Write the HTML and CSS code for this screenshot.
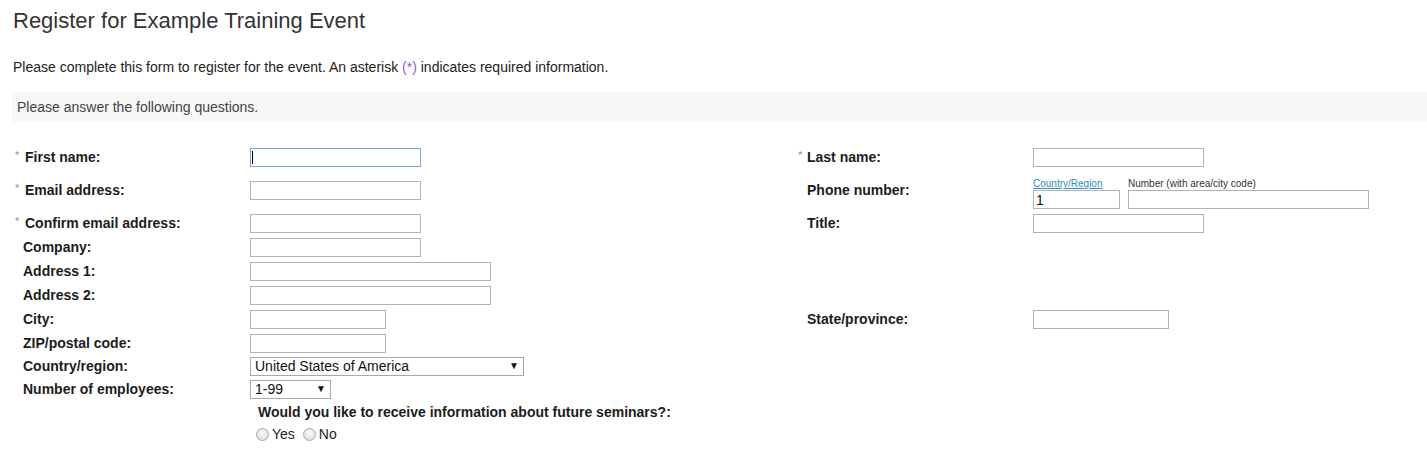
FILE: index.html
```html
<!DOCTYPE html>
<html lang="en">
<head>
<meta charset="utf-8">
<title>Register for Example Training Event</title>
<link rel="stylesheet" href="styles.css">
</head>
<body>
<div class="page">
  <h1 class="title">Register for Example Training Event</h1>
  <p class="intro">Please complete this form to register for the event. An asterisk <span class="req-note">(*)</span> indicates required information.</p>
  <div class="section-bar">Please answer the following questions.</div>

  <form class="form">
    <div class="row r33">
      <label class="lbl req-left"><span class="ast">*</span>First name:</label>
      <div class="field"><span class="caret-wrap"><input type="text" class="inp w172 focused"><span class="caret"></span></span></div>
      <label class="lbl right"><span class="ast ast-right">*</span>Last name:</label>
      <div class="field"><input type="text" class="inp w172"></div>
    </div>

    <div class="row r33">
      <label class="lbl req-left"><span class="ast">*</span>Email address:</label>
      <div class="field"><input type="text" class="inp w172"></div>
      <label class="lbl right">Phone number:</label>
      <div class="field phone">
        <div class="phone-caps">
          <a href="#" class="cap-link">Country/Region</a>
          <span class="cap-text">Number (with area/city code)</span>
        </div>
        <div class="phone-inputs">
          <input type="text" class="inp w88 val" value="1">
          <input type="text" class="inp w242">
        </div>
      </div>
    </div>

    <div class="row r24">
      <label class="lbl req-left"><span class="ast">*</span>Confirm email address:</label>
      <div class="field"><input type="text" class="inp w172"></div>
      <label class="lbl right">Title:</label>
      <div class="field"><input type="text" class="inp w172"></div>
    </div>

    <div class="row r24">
      <label class="lbl plain">Company:</label>
      <div class="field"><input type="text" class="inp w172"></div>
    </div>

    <div class="row r24">
      <label class="lbl plain">Address 1:</label>
      <div class="field"><input type="text" class="inp w242"></div>
    </div>

    <div class="row r24">
      <label class="lbl plain">Address 2:</label>
      <div class="field"><input type="text" class="inp w242"></div>
    </div>

    <div class="row r24">
      <label class="lbl plain">City:</label>
      <div class="field"><input type="text" class="inp w137"></div>
      <label class="lbl right">State/province:</label>
      <div class="field"><input type="text" class="inp w137"></div>
    </div>

    <div class="row r23">
      <label class="lbl plain">ZIP/postal code:</label>
      <div class="field"><input type="text" class="inp w137"></div>
    </div>

    <div class="row r23">
      <label class="lbl plain">Country/region:</label>
      <div class="field">
        <span class="sel-wrap w275">
          <select class="sel"><option>United States of America</option></select>
          <span class="arrow">&#9660;</span>
        </span>
      </div>
    </div>

    <div class="row r24">
      <label class="lbl plain">Number of employees:</label>
      <div class="field">
        <span class="sel-wrap w82">
          <select class="sel"><option>1-99</option></select>
          <span class="arrow">&#9660;</span>
        </span>
      </div>
    </div>

    <div class="question-row">
      <div class="question">Would you like to receive information about future seminars?:</div>
    </div>
    <div class="radio-row">
      <label class="radio"><input type="radio" name="seminars">Yes</label>
      <label class="radio"><input type="radio" name="seminars">No</label>
    </div>
  </form>
</div>
</body>
</html>
```

FILE: styles.css
```css
html, body {
  margin: 0;
  padding: 0;
  background: #ffffff;
}

body {
  font-family: "Liberation Sans", Arial, sans-serif;
  color: #222222;
}

.page {
  padding-top: 8px;
}

.title {
  margin: 0 0 0 13px;
  font-size: 22px;
  line-height: 26px;
  font-weight: normal;
  color: #333333;
}

.intro {
  margin: 23px 0 0 13px;
  font-size: 14px;
  line-height: 20px;
  color: #222222;
}

.req-note {
  color: #8a63d2;
}

.section-bar {
  margin: 15px 0 0 12px;
  height: 30px;
  line-height: 30px;
  padding-left: 5px;
  background: #f7f7f7;
  font-size: 14px;
  color: #444444;
}

.form {
  margin: 24px 0 0 13px;
}

.row {
  display: grid;
  grid-template-columns: 237px 547px 236px 1fr;
  align-items: start;
}

.r33 { height: 33px; }
.r24 { height: 24px; }
.r23 { height: 23px; }

.lbl {
  display: block;
  padding-top: 2px;
  font-size: 14px;
  line-height: 19px;
  font-weight: bold;
  color: #1c1c1c;
  white-space: nowrap;
}

.req-left { padding-left: 2px; }
.plain { padding-left: 10px; }
.right { padding-left: 10px; }

.ast {
  display: inline-block;
  width: 10px;
  font-size: 11px;
  font-weight: normal;
  color: #9a7fd8;
  vertical-align: top;
  line-height: 15px;
}

.ast-right {
  margin-left: -9px;
  width: 9px;
}

.field {
  padding-top: 2px;
}

.inp {
  box-sizing: border-box;
  height: 19px;
  margin: 0;
  padding: 0 2px;
  border: 1px solid #b3b3b3;
  background: #ffffff;
  font-family: "Liberation Sans", Arial, sans-serif;
  font-size: 14px;
  color: #111111;
  display: block;
  outline: none;
}

.w172 { width: 171px; }
.w242 { width: 241px; }
.w137 { width: 136px; }
.w88 { width: 87px; }

.focused {
  border-color: #7fa2e4;
}

.caret-wrap {
  position: relative;
  display: inline-block;
}

.caret {
  position: absolute;
  left: 2px;
  top: 3px;
  width: 1px;
  height: 13px;
  background: #000000;
}

.phone {
  margin-top: -2px;
  padding-top: 0;
}

.phone-caps {
  display: flex;
  height: 13px;
  line-height: 13px;
  font-size: 10px;
}

.cap-link {
  width: 95px;
  color: #2b8dc4;
  text-decoration: underline;
}

.cap-text {
  color: #333333;
}

.phone-inputs {
  display: flex;
  gap: 8px;
}

.val {
  padding-left: 2px;
  font-size: 14px;
  line-height: 17px;
}

.sel-wrap {
  position: relative;
  display: inline-block;
}

.w275 { width: 274px; }
.w82 { width: 81px; }

.sel {
  -webkit-appearance: none;
  appearance: none;
  box-sizing: border-box;
  width: 100%;
  height: 19px;
  margin: 0;
  padding: 0 0 0 4px;
  border: 1px solid #a9a9a9;
  border-radius: 0;
  background: #ffffff;
  font-family: "Liberation Sans", Arial, sans-serif;
  font-size: 14px;
  line-height: 17px;
  color: #111111;
  display: block;
}

.arrow {
  position: absolute;
  right: 5px;
  top: 4px;
  font-size: 10px;
  line-height: 10px;
  color: #111111;
  pointer-events: none;
}

.question-row {
  padding-left: 245px;
  height: 20px;
}

.question {
  font-size: 14px;
  line-height: 20px;
  font-weight: bold;
  color: #1c1c1c;
}

.radio-row {
  display: flex;
  gap: 8px;
  padding-left: 243px;
  padding-top: 2px;
  height: 20px;
  align-items: center;
}

.radio {
  display: inline-flex;
  align-items: center;
  font-size: 14px;
  line-height: 20px;
  color: #222222;
}

.radio input {
  -webkit-appearance: none;
  appearance: none;
  box-sizing: border-box;
  width: 13px;
  height: 13px;
  margin: 0 3px 0 0;
  border: 1px solid #a8a8a8;
  border-radius: 50%;
  background: radial-gradient(circle at 50% 40%, #fbfbfb 0%, #e6e6e6 60%, #cfcfcf 100%);
}
```
